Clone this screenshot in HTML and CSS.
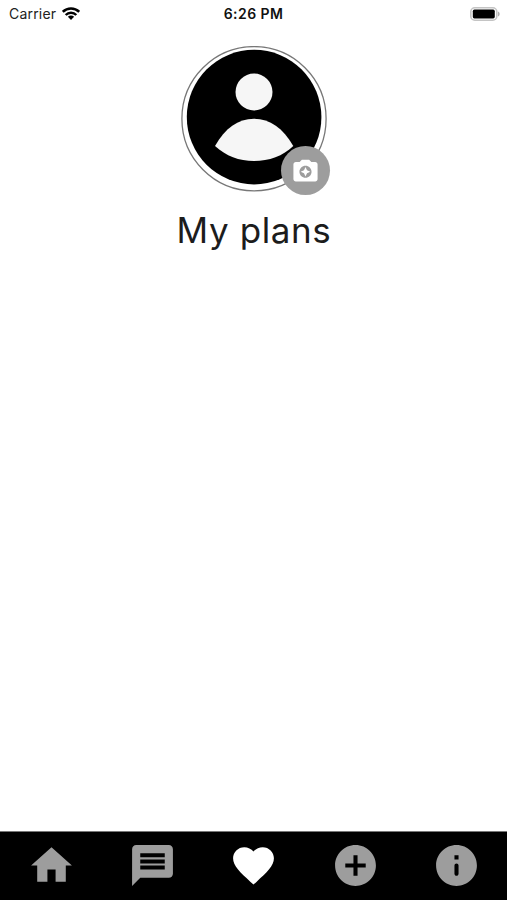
FILE: index.html
```html
<!DOCTYPE html>
<html lang="en">
<head>
<meta charset="utf-8">
<title>My plans</title>
<link rel="stylesheet" href="styles.css">
</head>
<body>
<div class="screen">
  <header class="status">
    <div class="status-left">
      <span class="carrier">Carrier</span>
      <svg class="wifi" viewBox="0 0 18 13"><g fill="none" stroke="#000" stroke-width="2.5"><path d="M.8 4.8a11.7 11.7 0 0 1 16.4 0"/><path d="M3.7 8a7.4 7.4 0 0 1 10.6 0"/></g><path d="M9 13 5.9 9.8a4.4 4.4 0 0 1 6.2 0z"/></svg>
    </div>
    <span class="time">6:26 PM</span>
    <div class="status-right">
      <svg class="battery" viewBox="0 0 30 14"><rect x=".8" y=".8" width="26" height="12.4" rx="4" fill="#fff" stroke="#c4c4c4" stroke-width="1.6"/><rect x="2.8" y="2.6" width="22" height="8.8" rx="1.6"/><path d="M28 4.6c2.2.9 2.2 3.9 0 4.8z" fill="#b0b0b0"/></svg>
    </div>
  </header>
  <main class="profile">
    <div class="avatar">
      <svg class="portrait" viewBox="0 0 146 146"><circle cx="73" cy="72.7" r="72.1" fill="#fff" stroke="#777" stroke-width="1.3"/><circle cx="73.1" cy="71.1" r="67.3"/><circle cx="73" cy="46" r="18.5" fill="#f6f6f6"/><path d="M34 100C44 82 57 72.7 73 72.7S102 82 112.3 100C102 110 88 115 73 115S45 110 34 100z" fill="#f6f6f6"/></svg>
      <div class="badge">
        <svg class="camera" viewBox="0 0 24 24"><path fill="#fff" d="M9 3 7.17 5H4c-1.1 0-2 .9-2 2v12c0 1.1.9 2 2 2h16c1.1 0 2-.9 2-2V7c0-1.1-.9-2-2-2h-3.17L15 3H9zm3 15c-2.76 0-5-2.24-5-5s2.24-5 5-5 5 2.24 5 5-2.24 5-5 5zm0-1 1.25-2.75L16 13l-2.75-1.25L12 9l-1.25 2.75L8 13l2.75 1.25L12 17z"/></svg>
      </div>
    </div>
    <h1 class="title">My plans</h1>
  </main>
  <nav class="tabs">
    <a class="tab"><svg viewBox="0 0 24 24"><path d="M10 20v-6h4v6h5v-8h3L12 3 2 12h3v8z"/></svg></a>
    <a class="tab"><svg viewBox="0 0 24 24"><path d="M20 2H4c-1.1 0-1.99.9-1.99 2L2 22l4-4h14c1.1 0 2-.9 2-2V4c0-1.1-.9-2-2-2zm-2 12H6v-2h12v2zm0-3H6V9h12v2zm0-3H6V6h12v2z"/></svg></a>
    <a class="tab active"><svg viewBox="0 0 24 24"><path d="m12 21.35-1.45-1.32C5.4 15.36 2 12.28 2 8.5 2 5.42 4.42 3 7.5 3c1.74 0 3.41.81 4.5 2.09C13.09 3.81 14.76 3 16.5 3 19.58 3 22 5.42 22 8.5c0 3.78-3.4 6.86-8.55 11.54L12 21.35z"/></svg></a>
    <a class="tab"><svg viewBox="0 0 24 24"><path d="M12 2C6.48 2 2 6.48 2 12s4.48 10 10 10 10-4.48 10-10S17.52 2 12 2zm5 11h-4v4h-2v-4H7v-2h4V7h2v4h4v2z"/></svg></a>
    <a class="tab"><svg viewBox="0 0 24 24"><path d="M12 2C6.48 2 2 6.48 2 12s4.48 10 10 10 10-4.48 10-10S17.52 2 12 2zm0 15c-.55 0-1-.45-1-1v-4c0-.55.45-1 1-1s1 .45 1 1v4c0 .55-.45 1-1 1zm1-8h-2V7h2v2z"/></svg></a>
  </nav>
</div>
</body>
</html>
```

FILE: styles.css
```css
* { box-sizing: border-box; }
body {
  margin: 0;
  background: #fff;
  font-family: Inter, "Liberation Sans", sans-serif;
}
svg { display: block; }
.screen {
  display: flex;
  flex-direction: column;
  height: 900px;
}
.status {
  display: grid;
  grid-template-columns: 1fr auto 1fr;
  align-items: center;
  height: 27px;
  padding: 0 7px 0 9px;
  color: #222;
  font-size: 14px;
  line-height: 27px;
}
.status-left {
  display: flex;
  align-items: center;
  gap: 6px;
}
.carrier { letter-spacing: 0.2px; }
.wifi { width: 18px; height: 13px; }
.time {
  color: #111;
  font-size: 14px;
  font-weight: 600;
  letter-spacing: 0.45px;
  margin-right: 2px;
}
.status-right { display: flex; justify-content: flex-end; }
.battery { width: 30px; height: 14px; }
.profile {
  display: flex;
  flex: 1;
  flex-direction: column;
  align-items: center;
  padding: 19px 0 0 1px;
}
.avatar {
  position: relative;
  width: 146px;
  height: 146px;
}
.portrait { width: 146px; height: 146px; }
.badge {
  position: absolute;
  right: -3px;
  bottom: -3px;
  display: flex;
  align-items: center;
  justify-content: center;
  width: 49px;
  height: 49px;
  border-radius: 50%;
  background: #9d9d9d;
}
.camera { width: 29px; height: 29px; }
.title {
  margin: 17px 0 0;
  color: #1c1c1c;
  font-size: 35px;
  font-weight: 400;
  line-height: 42px;
  letter-spacing: 0.6px;
}
.tabs {
  display: grid;
  grid-template-columns: repeat(5, 1fr);
  height: 69px;
  padding: 9px 0 0 1px;
  border-top: 1px solid #777;
  background: #000;
}
.tab {
  display: flex;
  justify-content: center;
}
.tab svg { width: 49px; height: 49px; fill: #9d9d9d; }
.tab.active svg { fill: #fff; }
```
